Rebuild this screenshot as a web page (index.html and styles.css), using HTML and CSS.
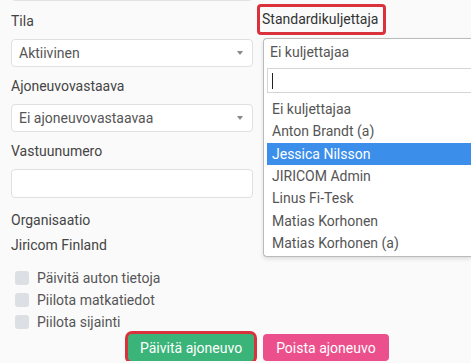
FILE: index.html
```html
<!DOCTYPE html>
<html lang="fi">
<head>
  <meta charset="UTF-8">
  <title>Ajoneuvo</title>
  <link rel="stylesheet" href="styles.css">
</head>
<body>

<div class="form">
  <div class="columns">
    <div class="left">
      <div class="prev-input"></div>

      <div class="field first">
        <div class="label">Tila</div>
        <div class="select">Aktiivinen<span class="arrow"></span></div>
      </div>

      <div class="field">
        <div class="label">Ajoneuvovastaava</div>
        <div class="select">Ei ajoneuvovastaavaa<span class="arrow"></span></div>
      </div>

      <div class="field">
        <div class="label">Vastuunumero</div>
        <div class="input"></div>
      </div>

      <div class="label org">Organisaatio</div>
      <div class="label org-name">Jiricom Finland</div>

      <div class="checks">
        <div class="check"><span class="box"></span>Päivitä auton tietoja</div>
        <div class="check"><span class="box"></span>Piilota matkatiedot</div>
        <div class="check"><span class="box"></span>Piilota sijainti</div>
      </div>
    </div>

    <div class="right">
      <div class="label marked">Standardikuljettaja</div>
      <div class="dropdown">
        <div class="dd-value">Ei kuljettajaa</div>
        <div class="dd-search"><span class="caret"></span></div>
        <ul class="dd-list">
          <li>Ei kuljettajaa</li>
          <li>Anton Brandt (a)</li>
          <li class="active">Jessica Nilsson</li>
          <li>JIRICOM Admin</li>
          <li>Linus Fi-Tesk</li>
          <li>Matias Korhonen</li>
          <li>Matias Korhonen (a)</li>
        </ul>
      </div>
    </div>
  </div>

  <div class="actions">
    <button class="btn save">Päivitä ajoneuvo</button>
    <button class="btn delete">Poista ajoneuvo</button>
  </div>
</div>

</body>
</html>
```

FILE: styles.css
```css
body {
  margin: 0;
  background: #fafafa;
  font-family: Roboto, "Liberation Sans", sans-serif;
  font-size: 14px;
  color: #444;
  overflow: hidden;
}
.columns {
  display: flex;
}
.left {
  flex-shrink: 0;
  width: 242px;
  margin-left: 11px;
}
.prev-input {
  height: 10px;
  margin-top: -11px;
  border: 1px solid #e2e2e2;
  border-radius: 4px;
  background: #fff;
}
.label {
  line-height: 20px;
}
.field {
  margin-top: 9px;
}
.field.first {
  margin-top: 10px;
}
.field .label {
  margin-bottom: 8px;
}
.select,
.input {
  box-sizing: border-box;
  height: 28px;
  line-height: 26px;
  padding-left: 7px;
  border: 1px solid #e0e0e0;
  border-radius: 4px;
  background: #fff;
  color: #555;
  display: flex;
  justify-content: space-between;
  align-items: center;
}
.input {
  height: 29px;
}
.arrow {
  width: 0;
  height: 0;
  margin-right: 9px;
  border-left: 3px solid transparent;
  border-right: 3px solid transparent;
  border-top: 4px solid #888;
}
.org {
  margin-top: 12px;
}
.org-name {
  margin-top: 5px;
}
.checks {
  margin-top: 12px;
}
.check {
  height: 22px;
  display: flex;
  align-items: center;
  gap: 8px;
  padding-left: 4px;
  color: #555;
}
.box {
  width: 14px;
  height: 14px;
  border-radius: 3px;
  background: #dcdfe3;
}
.right {
  flex: 1;
  margin-left: 4px;
  padding-top: 4px;
}
.marked {
  display: inline-block;
  line-height: 25px;
  padding: 0 5px 0 2px;
  border: 3px solid #d9323c;
  border-radius: 4px;
  color: #333;
}
.dropdown {
  margin: 3px 0 0 6px;
  border: 1px solid #bbb;
  border-right: none;
  border-radius: 4px 0 0 4px;
  background: #fff;
  box-shadow: 0 2px 4px rgba(0,0,0,0.12);
}
.dd-value {
  height: 28px;
  line-height: 26px;
  padding-left: 6px;
  color: #555;
}
.dd-search {
  box-sizing: border-box;
  height: 25px;
  margin: 1px 0 0 3px;
  border: 1px solid #d4d4d4;
  border-right: none;
  display: flex;
  align-items: center;
  padding-left: 4px;
}
.caret {
  width: 1px;
  height: 16px;
  background: #222;
}
.dd-list {
  list-style: none;
  margin: 0 0 0 3px;
  padding: 5px 0 2px;
}
.dd-list li {
  height: 22.33px;
  line-height: 22px;
  padding-left: 5px;
  color: #555;
}
.dd-list li.active {
  background: #3b8eea;
  color: #fff;
}
.actions {
  display: flex;
  gap: 9px;
  margin: 1px 0 0 128px;
}
.btn {
  height: 27px;
  padding: 0 12px;
  border: none;
  border-radius: 4px;
  font-family: Roboto, "Liberation Sans", sans-serif;
  font-size: 14px;
  color: #fff;
  cursor: pointer;
}
.btn.save {
  background: #3ab478;
  box-shadow: 0 0 0 3px #d9323c;
}
.btn.delete {
  background: #ec508c;
  padding: 0 13px;
}
```
